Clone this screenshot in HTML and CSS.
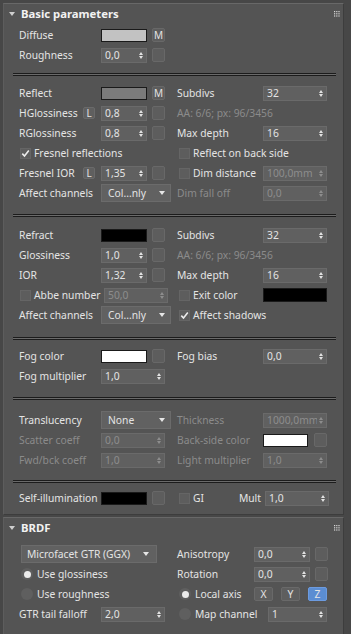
FILE: index.html
```html
<!DOCTYPE html>
<html lang="en">

<head>
    <meta charset="utf-8">
    <title>Material parameters</title>
    <link rel="stylesheet" href="styles.css">
</head>

<body>
<div class="panel">
    <div class="rollout">
        <div class="roll-head">
            <span class="tri"></span>
            <span class="roll-title">Basic parameters</span>
            <svg class="grip" width="6" height="6" viewBox="0 0 6 6"><g fill="#d8d8d8"><rect x="0" y="0" width="1.2" height="1.2"/><rect x="2.2" y="0" width="1.2" height="1.2"/><rect x="4.4" y="0" width="1.2" height="1.2"/><rect x="0" y="2.2" width="1.2" height="1.2"/><rect x="2.2" y="2.2" width="1.2" height="1.2"/><rect x="4.4" y="2.2" width="1.2" height="1.2"/><rect x="0" y="4.4" width="1.2" height="1.2"/><rect x="2.2" y="4.4" width="1.2" height="1.2"/><rect x="4.4" y="4.4" width="1.2" height="1.2"/></g></svg>
        </div>

        <!-- diffuse -->
        <div class="sec s1">
            <div class="col left">
                <div class="row"><span class="lbl">Diffuse</span><span class="swatch diffuse"></span><span class="btn">M</span></div>
                <div class="row"><span class="lbl">Roughness</span><span class="spin"><span class="val">0,0</span><span class="arr"></span></span><span class="btn"></span></div>
            </div>
        </div>
        <div class="sep"></div>

        <!-- reflection -->
        <div class="sec s2">
            <div class="col left">
                <div class="row"><span class="lbl">Reflect</span><span class="swatch reflect"></span><span class="btn">M</span></div>
                <div class="row"><span class="lbl">HGlossiness<span class="lock">L</span></span><span class="spin"><span class="val">0,8</span><span class="arr"></span></span><span class="btn"></span></div>
                <div class="row"><span class="lbl">RGlossiness</span><span class="spin"><span class="val">0,8</span><span class="arr"></span></span><span class="btn"></span></div>
                <div class="row"><span class="chk"><svg width="9" height="9" viewBox="0 0 9 9"><path d="M1.3 4.6 L3.5 7 L7.8 1.6" fill="none" stroke="#ececec" stroke-width="1.6"/></svg></span><span>Fresnel reflections</span></div>
                <div class="row"><span class="lbl">Fresnel IOR<span class="lock">L</span></span><span class="spin"><span class="val">1,35</span><span class="arr"></span></span><span class="btn"></span></div>
                <div class="row"><span class="lbl">Affect channels</span><span class="drop"><span>Col...nly</span><span class="down"></span></span></div>
            </div>
            <div class="col right">
                <div class="row"><span class="lbl">Subdivs</span><span class="spin wide"><span class="val">32</span><span class="arr"></span></span></div>
                <div class="row dim">AA: 6/6; px: 96/3456</div>
                <div class="row"><span class="lbl">Max depth</span><span class="spin wide"><span class="val">16</span><span class="arr"></span></span></div>
                <div class="row"><span class="chk"></span><span>Reflect on back side</span></div>
                <div class="row"><span class="chk"></span><span class="lbl-chk">Dim distance</span><span class="spin wide off"><span class="val">100,0mm</span><span class="arr"></span></span></div>
                <div class="row"><span class="lbl dim">Dim fall off</span><span class="spin wide off"><span class="val">0,0</span><span class="arr"></span></span></div>
            </div>
        </div>
        <div class="sep"></div>

        <!-- refraction -->
        <div class="sec s3">
            <div class="col left">
                <div class="row"><span class="lbl">Refract</span><span class="swatch black"></span><span class="btn"></span></div>
                <div class="row"><span class="lbl">Glossiness</span><span class="spin"><span class="val">1,0</span><span class="arr"></span></span><span class="btn"></span></div>
                <div class="row"><span class="lbl">IOR</span><span class="spin"><span class="val">1,32</span><span class="arr"></span></span><span class="btn"></span></div>
                <div class="row"><span class="chk"></span><span class="lbl-abbe">Abbe number</span><span class="spin long off"><span class="val">50,0</span><span class="arr"></span></span></div>
                <div class="row"><span class="lbl">Affect channels</span><span class="drop"><span>Col...nly</span><span class="down"></span></span></div>
            </div>
            <div class="col right">
                <div class="row"><span class="lbl">Subdivs</span><span class="spin wide"><span class="val">32</span><span class="arr"></span></span></div>
                <div class="row dim">AA: 6/6; px: 96/3456</div>
                <div class="row"><span class="lbl">Max depth</span><span class="spin wide"><span class="val">16</span><span class="arr"></span></span></div>
                <div class="row"><span class="chk"></span><span class="lbl-chk">Exit color</span><span class="swatch black wide"></span></div>
                <div class="row"><span class="chk"><svg width="9" height="9" viewBox="0 0 9 9"><path d="M1.3 4.6 L3.5 7 L7.8 1.6" fill="none" stroke="#ececec" stroke-width="1.6"/></svg></span><span>Affect shadows</span></div>
            </div>
        </div>
        <div class="sep"></div>

        <!-- fog -->
        <div class="sec s4">
            <div class="col left">
                <div class="row"><span class="lbl">Fog color</span><span class="swatch white"></span><span class="btn"></span></div>
                <div class="row"><span class="lbl">Fog multiplier</span><span class="spin long"><span class="val">1,0</span><span class="arr"></span></span></div>
            </div>
            <div class="col right">
                <div class="row"><span class="lbl">Fog bias</span><span class="spin wide"><span class="val">0,0</span><span class="arr"></span></span></div>
            </div>
        </div>
        <div class="sep"></div>

        <!-- translucency -->
        <div class="sec s5">
            <div class="col left">
                <div class="row"><span class="lbl">Translucency</span><span class="drop"><span>None</span><span class="down"></span></span></div>
                <div class="row"><span class="lbl dim">Scatter coeff</span><span class="spin long off"><span class="val">0,0</span><span class="arr"></span></span></div>
                <div class="row"><span class="lbl dim">Fwd/bck coeff</span><span class="spin long off"><span class="val">1,0</span><span class="arr"></span></span></div>
            </div>
            <div class="col right">
                <div class="row"><span class="lbl dim">Thickness</span><span class="spin wide off"><span class="val clip">1000,0mm</span><span class="arr"></span></span></div>
                <div class="row"><span class="lbl dim">Back-side color</span><span class="swatch white"></span><span class="btn gap6"></span></div>
                <div class="row"><span class="lbl dim">Light multiplier</span><span class="spin wide off"><span class="val">1,0</span><span class="arr"></span></span></div>
            </div>
        </div>
        <div class="sep"></div>

        <!-- self-illumination -->
        <div class="sec s6">
            <div class="col left">
                <div class="row"><span class="lbl">Self-illumination</span><span class="swatch black"></span><span class="btn"></span></div>
            </div>
            <div class="col right">
                <div class="row"><span class="chk"></span><span>GI</span><span class="mult">Mult</span><span class="spin wide"><span class="val">1,0</span><span class="arr"></span></span></div>
            </div>
        </div>
    </div>

    <div class="rollout second">
        <div class="roll-head">
            <span class="tri"></span>
            <span class="roll-title">BRDF</span>
            <svg class="grip" width="6" height="6" viewBox="0 0 6 6"><g fill="#d8d8d8"><rect x="0" y="0" width="1.2" height="1.2"/><rect x="2.2" y="0" width="1.2" height="1.2"/><rect x="4.4" y="0" width="1.2" height="1.2"/><rect x="0" y="2.2" width="1.2" height="1.2"/><rect x="2.2" y="2.2" width="1.2" height="1.2"/><rect x="4.4" y="2.2" width="1.2" height="1.2"/><rect x="0" y="4.4" width="1.2" height="1.2"/><rect x="2.2" y="4.4" width="1.2" height="1.2"/><rect x="4.4" y="4.4" width="1.2" height="1.2"/></g></svg>
        </div>
        <div class="sec brdf">
            <div class="col left">
                <div class="row"><span class="drop big"><span>Microfacet GTR (GGX)</span><span class="down"></span></span></div>
                <div class="row"><span class="radio on"></span><span>Use glossiness</span></div>
                <div class="row"><span class="radio"></span><span>Use roughness</span></div>
                <div class="row"><span class="lbl">GTR tail falloff</span><span class="spin long"><span class="val">2,0</span><span class="arr"></span></span></div>
            </div>
            <div class="col right">
                <div class="row"><span class="lbl">Anisotropy</span><span class="spin mid"><span class="val">0,0</span><span class="arr"></span></span><span class="btn"></span></div>
                <div class="row"><span class="lbl">Rotation</span><span class="spin mid"><span class="val">0,0</span><span class="arr"></span></span><span class="btn"></span></div>
                <div class="row"><span class="radio on"></span><span class="lbl-radio">Local axis</span><span class="axis">X</span><span class="axis">Y</span><span class="axis on">Z</span></div>
                <div class="row"><span class="radio"></span><span class="lbl-radio map">Map channel</span><span class="spin chan"><span class="val">1</span><span class="arr"></span></span></div>
            </div>
        </div>
    </div>
</div>
</body>

</html>
```

FILE: styles.css
```css
body {
    margin: 0;
    background-color: #474747;
    color: #e4e4e4;
    font-family: "Noto Sans", "Open Sans", sans-serif;
    font-size: 10.3px;
}

.panel {
    width: 341px;
    padding: 3px 0 0 3px;
}

.rollout {
    background-color: #545454;
    border-top: 1px solid #686868;
    border-left: 1px solid #5d5d5d;
    border-right: 1px solid #3d3d3d;
    border-bottom: 1px solid #3d3d3d;
    padding-bottom: 6px;
}

.rollout.second {
    margin-top: 2px;
    padding-bottom: 20px;
}

.roll-head {
    display: flex;
    align-items: center;
    height: 19px;
    padding-left: 5px;
}

.tri {
    width: 0;
    height: 0;
    border-left: 3px solid transparent;
    border-right: 3px solid transparent;
    border-top: 4px solid #cfcfcf;
}

.roll-title {
    margin-left: 6px;
    font-weight: bold;
    font-size: 11.3px;
    color: #f2f2f2;
}

.grip {
    margin-left: auto;
    margin-right: 3px;
}

.sep {
    height: 1px;
    margin: 0 7px 0 9px;
    background-color: #6a6a6a;
    border-top: 1px solid #1c1c1c;
    border-bottom: 1px solid #1c1c1c;
}

.sec {
    display: flex;
    padding-left: 15px;
}

.s1 { padding-top: 2px; padding-bottom: 8px; }
.s2 { padding-top: 7px; padding-bottom: 11px; }
.s3 { padding-top: 8px; padding-bottom: 12px; }
.s4 { padding-top: 6px; padding-bottom: 11px; }
.s5 { padding-top: 10px; padding-bottom: 10px; }
.s6 { padding-top: 5px; }
.brdf { padding-top: 7px; }

.col.left {
    width: 158px;
}

.col.right {
    width: 152px;
}

.row {
    display: flex;
    align-items: center;
    height: 20px;
    white-space: nowrap;
}

.lbl {
    display: flex;
    align-items: center;
    flex-shrink: 0;
    width: 82px;
}

.right .lbl {
    width: 86px;
}

.brdf .right .lbl {
    width: 77px;
}

.dim {
    color: #8b8b8b;
}

.lock {
    margin-left: auto;
    margin-right: 6px;
    width: 12px;
    height: 12px;
    box-sizing: border-box;
    background-color: #5f5f5f;
    border: 1px solid #6a6a6a;
    border-radius: 2px;
    display: flex;
    align-items: center;
    justify-content: center;
    font-size: 10px;
}

.swatch {
    width: 46px;
    height: 13px;
    box-sizing: border-box;
    border: 1px solid #1a1a1a;
    flex-shrink: 0;
}

.swatch.diffuse { background-color: #c2c2c2; }
.swatch.reflect { background-color: #7b7b7b; }
.swatch.black { background-color: #000; }
.swatch.white { background-color: #fff; }
.swatch.wide { width: 64px; height: 14px; }

.right .swatch.white { width: 45px; }

.btn {
    width: 13px;
    height: 14px;
    margin-left: 5px;
    box-sizing: border-box;
    background-color: #5d5d5d;
    border: 1px solid #686868;
    border-radius: 2px;
    display: flex;
    align-items: center;
    justify-content: center;
    font-size: 10px;
    flex-shrink: 0;
}

.btn.gap6 {
    margin-left: 6px;
}

.spin {
    width: 46px;
    height: 15px;
    box-sizing: border-box;
    padding: 0 3px 0 3px;
    background-color: #606060;
    border: 1px solid #6a6a6a;
    display: flex;
    align-items: center;
    flex-shrink: 0;
}

.spin.long { width: 64px; }
.spin.wide { width: 64px; }
.spin.mid { width: 56px; }
.spin.chan { width: 59px; }

.spin .val {
    flex: 1;
    overflow: hidden;
}

.spin .val.clip {
    flex: none;
    width: 50px;
}

.spin.off {
    color: #8d8d8d;
}

.arr {
    display: flex;
    flex-direction: column;
    gap: 1px;
    margin-left: auto;
}

.arr::before,
.arr::after {
    content: "";
    width: 0;
    height: 0;
    border-left: 2.5px solid transparent;
    border-right: 2.5px solid transparent;
}

.arr::before {
    border-bottom: 3px solid #e2e2e2;
}

.arr::after {
    border-top: 3px solid #e2e2e2;
}

.spin.off .arr::before { border-bottom-color: #8d8d8d; }
.spin.off .arr::after { border-top-color: #8d8d8d; }

.drop {
    width: 70px;
    height: 18px;
    box-sizing: border-box;
    padding: 0 5px 0 6px;
    background-color: #616161;
    border: 1px solid #6b6b6b;
    display: flex;
    align-items: center;
}

.drop.big {
    width: 136px;
    margin-left: 2px;
    padding-left: 5px;
    padding-right: 7px;
}

.down {
    margin-left: auto;
    width: 0;
    height: 0;
    border-left: 3.5px solid transparent;
    border-right: 3.5px solid transparent;
    border-top: 4px solid #e6e6e6;
}

.chk {
    width: 11px;
    height: 11px;
    box-sizing: border-box;
    margin: 0 3px 0 1px;
    background-color: #5d5d5d;
    border: 1px solid #656565;
    display: flex;
    align-items: center;
    justify-content: center;
    flex-shrink: 0;
}

.right .chk {
    margin-left: 2px;
}

.lbl-chk {
    width: 70px;
}

.lbl-abbe {
    width: 70px;
}

.mult {
    margin-left: auto;
    margin-right: 4px;
}

.radio {
    width: 12px;
    height: 12px;
    box-sizing: border-box;
    margin: 0 4px 0 2px;
    border-radius: 50%;
    background-color: #5f5f5f;
    display: flex;
    align-items: center;
    justify-content: center;
    flex-shrink: 0;
}

.radio.on::after {
    content: "";
    width: 7px;
    height: 7px;
    border-radius: 50%;
    background-color: #ececec;
}

.lbl-radio {
    width: 59px;
}

.lbl-radio.map {
    width: 73px;
}

.axis {
    width: 19px;
    height: 14px;
    box-sizing: border-box;
    margin-right: 8px;
    background-color: #5e5e5e;
    border: 1px solid #696969;
    border-radius: 2px;
    display: flex;
    align-items: center;
    justify-content: center;
}

.axis.on {
    margin-right: 0;
    background-color: #5b8dd2;
    border-color: #6c9be0;
}
```
